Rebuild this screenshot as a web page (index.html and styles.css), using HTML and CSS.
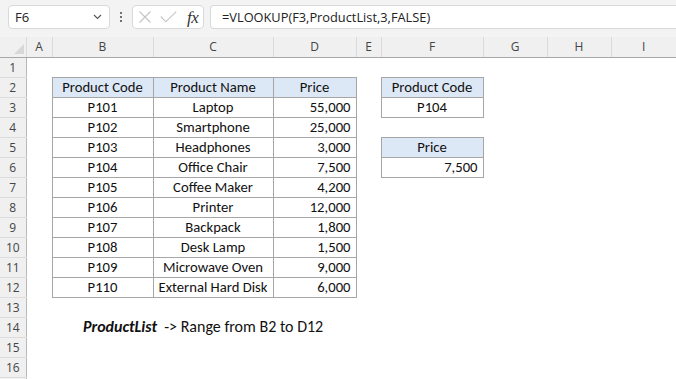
FILE: index.html
```html
<!DOCTYPE html>
<html lang="en">
<head>
<meta charset="utf-8">
<title>VLOOKUP</title>
<link rel="stylesheet" href="styles.css">
</head>
<body>
<div class="fbar">
  <div class="namebox">
    <span class="ref">F6</span>
    <svg class="chev" width="9" height="6" viewBox="0 0 9 6"><path d="M1 1 L4.5 4.5 L8 1" fill="none" stroke="#555" stroke-width="1.1"/></svg>
  </div>
  <div class="vdots"><i></i><i></i><i></i></div>
  <div class="fbtns">
    <svg class="ico-x" width="14" height="12" viewBox="0 0 14 12"><path d="M1.5 0.5 L12.5 11.5 M12.5 0.5 L1.5 11.5" stroke="#c4c4c4" stroke-width="1.1" fill="none"/></svg>
    <svg class="ico-ok" width="17" height="12" viewBox="0 0 17 12"><path d="M0.8 5.5 L5.8 10.8 L16.2 0.6" stroke="#c4c4c4" stroke-width="1.1" fill="none"/></svg>
    <span class="fx">fx</span>
  </div>
  <div class="finput">=VLOOKUP(F3,ProductList,3,FALSE)</div>
</div>
<table class="sheet">
  <colgroup>
    <col class="w-rh"><col class="w-a"><col class="w-b"><col class="w-c"><col class="w-d"><col class="w-e"><col class="w-f"><col class="w-g"><col class="w-h"><col class="w-i">
  </colgroup>
  <thead>
    <tr class="hrow">
      <th class="corner"><span class="tri"></span></th><th>A</th><th>B</th><th>C</th><th>D</th><th>E</th><th>F</th><th>G</th><th>H</th><th>I</th>
    </tr>
  </thead>
  <tbody>
    <tr><th>1</th><td></td><td></td><td></td><td></td><td></td><td></td><td></td><td></td><td></td></tr>
    <tr><th>2</th><td></td><td class="bd hd">Product Code</td><td class="bd hd">Product Name</td><td class="bd hd">Price</td><td></td><td class="bd hd">Product Code</td><td></td><td></td><td></td></tr>
    <tr><th>3</th><td></td><td class="bd ct">P101</td><td class="bd ct">Laptop</td><td class="bd num">55,000</td><td></td><td class="bd ct">P104</td><td></td><td></td><td></td></tr>
    <tr><th>4</th><td></td><td class="bd ct">P102</td><td class="bd ct">Smartphone</td><td class="bd num">25,000</td><td></td><td></td><td></td><td></td><td></td></tr>
    <tr><th>5</th><td></td><td class="bd ct">P103</td><td class="bd ct">Headphones</td><td class="bd num">3,000</td><td></td><td class="bd hd">Price</td><td></td><td></td><td></td></tr>
    <tr><th>6</th><td></td><td class="bd ct">P104</td><td class="bd ct">Office Chair</td><td class="bd num">7,500</td><td></td><td class="bd num">7,500</td><td></td><td></td><td></td></tr>
    <tr><th>7</th><td></td><td class="bd ct">P105</td><td class="bd ct">Coffee Maker</td><td class="bd num">4,200</td><td></td><td></td><td></td><td></td><td></td></tr>
    <tr><th>8</th><td></td><td class="bd ct">P106</td><td class="bd ct">Printer</td><td class="bd num">12,000</td><td></td><td></td><td></td><td></td><td></td></tr>
    <tr><th>9</th><td></td><td class="bd ct">P107</td><td class="bd ct">Backpack</td><td class="bd num">1,800</td><td></td><td></td><td></td><td></td><td></td></tr>
    <tr><th>10</th><td></td><td class="bd ct">P108</td><td class="bd ct">Desk Lamp</td><td class="bd num">1,500</td><td></td><td></td><td></td><td></td><td></td></tr>
    <tr><th>11</th><td></td><td class="bd ct">P109</td><td class="bd ct">Microwave Oven</td><td class="bd num">9,000</td><td></td><td></td><td></td><td></td><td></td></tr>
    <tr><th>12</th><td></td><td class="bd ct">P110</td><td class="bd ct">External Hard Disk</td><td class="bd num">6,000</td><td></td><td></td><td></td><td></td><td></td></tr>
    <tr><th>13</th><td></td><td></td><td></td><td></td><td></td><td></td><td></td><td></td><td></td></tr>
    <tr><th>14</th><td></td><td class="note" colspan="4"><b><i>ProductList</i></b>&nbsp; -&gt; Range from B2 to D12</td><td></td><td></td><td></td><td></td></tr>
    <tr><th>15</th><td></td><td></td><td></td><td></td><td></td><td></td><td></td><td></td><td></td></tr>
    <tr><th>16</th><td></td><td></td><td></td><td></td><td></td><td></td><td></td><td></td><td></td></tr>
    <tr><th></th><td></td><td></td><td></td><td></td><td></td><td></td><td></td><td></td><td></td></tr>
  </tbody>
</table>
</body>
</html>
```

FILE: styles.css
```css
html, body {
  margin: 0;
  padding: 0;
  background: #ffffff;
  overflow: hidden;
}

body {
  width: 676px;
  height: 379px;
}

.fbar {
  display: flex;
  align-items: center;
  height: 37px;
  padding: 0 0 3px 8px;
  box-sizing: border-box;
  background: #f3f3f3;
  font-family: "Open Sans", "Noto Sans", sans-serif;
}

.namebox {
  width: 102px;
  height: 24px;
  box-sizing: border-box;
  border: 1px solid #d9d9d9;
  border-radius: 4px;
  background: #fff;
  display: flex;
  align-items: center;
  justify-content: space-between;
  padding: 0 7px 0 6px;
  font-size: 13px;
  color: #222;
}

.chev {
  display: block;
}

.vdots {
  width: 22px;
  height: 24px;
  display: flex;
  flex-direction: column;
  align-items: center;
  justify-content: center;
  gap: 2px;
}

.vdots i {
  display: block;
  width: 2px;
  height: 2px;
  background: #444;
  border-radius: 1px;
}

.fbtns {
  width: 72px;
  height: 24px;
  box-sizing: border-box;
  border: 1px solid #d9d9d9;
  border-radius: 4px;
  background: #fff;
  display: flex;
  align-items: center;
  padding-left: 5px;
}

.ico-x {
  margin-right: 8px;
}

.ico-ok {
  margin-right: 10px;
}

.fx {
  font-family: "Liberation Serif", "DejaVu Serif", serif;
  font-style: italic;
  font-size: 17px;
  color: #333;
  letter-spacing: -0.5px;
  line-height: 1;
}

.finput {
  flex: 1;
  height: 24px;
  margin-left: 6px;
  box-sizing: border-box;
  border: 1px solid #d9d9d9;
  border-right: none;
  border-radius: 4px 0 0 4px;
  background: #fff;
  display: flex;
  align-items: center;
  padding-left: 11px;
  font-size: 12.8px;
  color: #222;
}

.sheet {
  border-collapse: collapse;
  table-layout: fixed;
  width: 676px;
  font-family: "Carlito", "Lato", sans-serif;
  font-size: 14.67px;
  color: #111;
}

.w-rh { width: 26px; }
.w-a { width: 26px; }
.w-b { width: 101px; }
.w-c { width: 120px; }
.w-d { width: 83px; }
.w-e { width: 25px; }
.w-f { width: 102px; }
.w-g { width: 64px; }
.w-h { width: 64px; }
.w-i { width: 65px; }

.sheet tr {
  height: 20px;
}

.sheet td {
  padding: 0 5px;
  white-space: nowrap;
  overflow: visible;
  line-height: 18px;
}

.sheet th {
  background: #f0f0f0;
  font-family: "Open Sans", "Noto Sans", sans-serif;
  font-weight: normal;
  font-size: 12px;
  color: #444;
  padding: 0;
  text-align: center;
}

.sheet tbody th {
  border-right: 1px solid #b8b8b8;
  border-bottom: 1px solid #dcdcdc;
}

.sheet thead th {
  height: 19px;
  border-bottom: 1px solid #a8a8a8;
  border-left: 1px solid #dadada;
}

.sheet thead th.corner {
  border-left: none;
  border-right: 1px solid #dadada;
  position: relative;
}

.tri {
  position: absolute;
  right: 2px;
  bottom: 3px;
  width: 0;
  height: 0;
  border-left: 10px solid transparent;
  border-bottom: 10px solid #d8d8d8;
}

.bd {
  border: 1px solid #a6a6a6;
}

.hd {
  background: #dde8f6;
  text-align: center;
}

.ct {
  text-align: center;
}

.num {
  text-align: right;
}

.note {
  padding-left: 31px !important;
  font-size: 16px;
}

.note b {
  font-weight: bold;
}
```
